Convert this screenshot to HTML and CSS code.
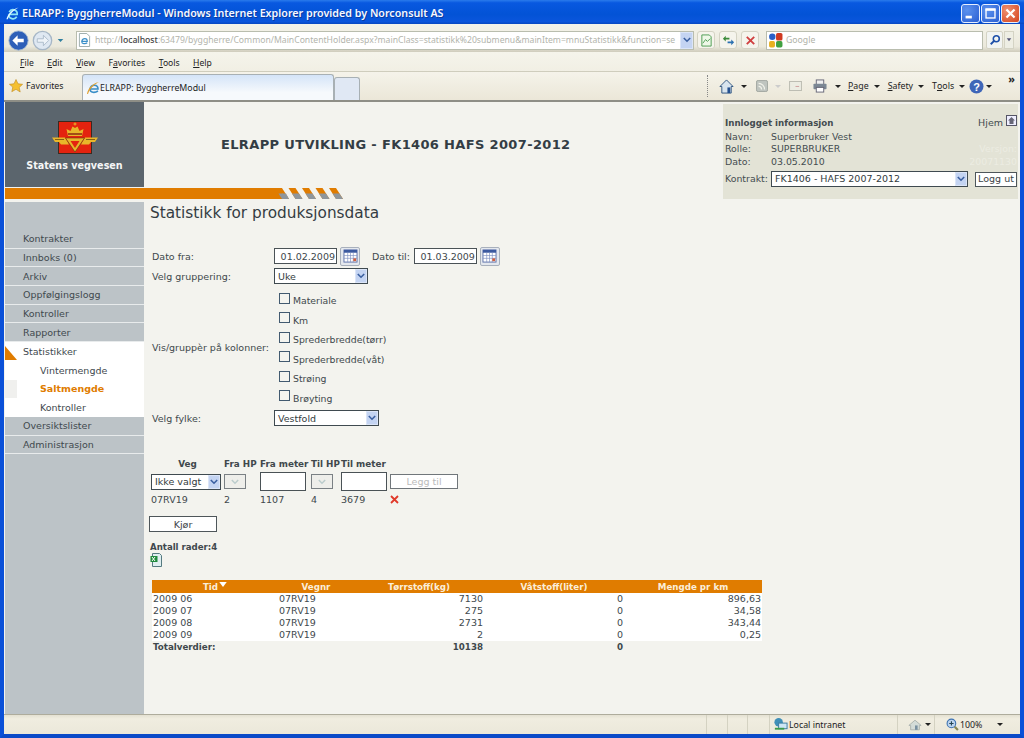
FILE: index.html
```html
<!DOCTYPE html>
<html lang="no">
<head>
<meta charset="utf-8">
<title>ELRAPP: ByggherreModul</title>
<link rel="stylesheet" href="styles.css">
</head>
<body>
<div class="window">
  <header class="titlebar">
    <svg class="ie-title" viewBox="0 0 16 16"><path d="M4 9h9A4.500 4.500 0 0 0 4.500 6.500M4 9a4.600 4.600 0 0 0 8.500 2.500" fill="none" stroke="#8fe4f5" stroke-width="1.800"/><path d="M1.500 14C3 8 8 3 14.500 1.500 10 4 5 8 3 14Z" fill="#e4f8ff"/></svg>
    <span class="title-text">ELRAPP: ByggherreModul - Windows Internet Explorer provided by Norconsult AS</span>
    <div class="win-btns">
      <span class="win-btn"><svg viewBox="0 0 19 19"><rect x="4" y="12" width="7" height="3" fill="#fff"/></svg></span>
      <span class="win-btn"><svg viewBox="0 0 19 19"><rect x="4.500" y="4.500" width="10" height="10" fill="none" stroke="#fff" stroke-width="1.500"/><rect x="4" y="4" width="11" height="2.500" fill="#fff"/></svg></span>
      <span class="win-btn close"><svg viewBox="0 0 19 19"><path d="M5 5l9 9M14 5l-9 9" stroke="#fff" stroke-width="2.500"/></svg></span>
    </div>
  </header>

  <div class="address-row">
    <svg class="nav-back" viewBox="0 0 24 24"><circle cx="12" cy="12" r="11" fill="#2d5fb8" stroke="#9db4cf"/><path d="M5 12l6-6v4h7v4h-7v4Z" fill="#fff"/></svg>
    <svg class="nav-fwd" viewBox="0 0 24 24"><circle cx="12" cy="12" r="10.500" fill="#dfe8f2" stroke="#a6b6c6" stroke-width="1.500"/><path d="M19 12l-6-6v4H6v4h7v4Z" fill="#eef3f8" stroke="#a8b8c8"/></svg>
    <svg class="nav-drop" viewBox="0 0 10 6"><path d="M1 1h8L5 5Z" fill="#2f7f9f"/></svg>
    <div class="url-box">
      <svg class="page-ico" viewBox="0 0 14 15"><path d="M1.500.500h8l3 3v11h-11Z" fill="#fff" stroke="#9aa"/><path d="M4 9h6c0-4-5-4-6 0 0 3 4 3 6 1.500" fill="none" stroke="#3a8fc8" stroke-width="1.300"/></svg>
      <span class="url"><span class="url-dim">http://</span><b class="url-host">localhost</b><span class="url-dim">:63479/byggherre/Common/MainContentHolder.aspx?mainClass=statistikk%20submenu&amp;mainItem=mnuStatistikk&amp;function=se</span></span>
      <span class="combo-arrow url-arrow"><svg viewBox="0 0 10 7"><path d="M1 1l4 4 4-4" fill="none" stroke="#3a5fa0" stroke-width="2"/></svg></span>
    </div>
    <span class="tool-btn"><svg viewBox="0 0 14 14"><path d="M2 1h8l2 2v10H2Z" fill="#eef8e8" stroke="#4a9a50"/><path d="M3 10l3-4 2 2 3-3" fill="none" stroke="#4a9a50"/></svg></span>
    <span class="tool-btn"><svg viewBox="0 0 14 14"><path d="M1 5l3-3v2h4v2H4v2Z" fill="#3a8a3a"/><path d="M13 9l-3 3v-2H6V8h4V6Z" fill="#2a70b0"/></svg></span>
    <span class="tool-btn"><svg viewBox="0 0 14 14"><path d="M3 3l8 8M11 3l-8 8" stroke="#d04040" stroke-width="2"/></svg></span>
    <div class="search-box">
      <svg class="g-ico" viewBox="0 0 14 14"><circle cx="4" cy="3.500" r="3" fill="#2a60c8"/><rect x="7.500" y="0" width="6" height="7" rx="1.500" fill="#d03a20"/><rect x="1" y="7.500" width="5.500" height="6" rx="1.500" fill="#e8b020"/><rect x="7.500" y="7.500" width="6" height="6" rx="1.500" fill="#40a040"/></svg>
      <span class="search-text">Google</span>
    </div>
    <span class="search-btn"><svg viewBox="0 0 14 14"><circle cx="8.500" cy="5.500" r="3.500" fill="none" stroke="#1d4fa8" stroke-width="1.800"/><path d="M6 8l-4 4" stroke="#1d4fa8" stroke-width="2.200"/></svg></span>
    <span class="search-drop"><svg viewBox="0 0 8 5"><path d="M1 0h6L4 4Z" fill="#557"/></svg></span>
  </div>

  <nav class="menu-row">
    <span class="menu-item"><u>F</u>ile</span>
    <span class="menu-item"><u>E</u>dit</span>
    <span class="menu-item"><u>V</u>iew</span>
    <span class="menu-item">F<u>a</u>vorites</span>
    <span class="menu-item"><u>T</u>ools</span>
    <span class="menu-item"><u>H</u>elp</span>
  </nav>

  <div class="tab-row">
    <span class="fav-btn"><svg viewBox="0 0 14 14"><path d="M7 .5l2 4.300 4.600.5-3.400 3.100 1 4.600L7 10.300l-4.200 2.400 1-4.600L.4 5.300 5 4.800Z" fill="#f5c030" stroke="#c08a20" stroke-width=".6"/></svg>Favorites</span>
    <span class="tab"><svg viewBox="0 0 14 14"><path d="M4 8h8c0-5-7-5-8 0 0 4 5 4 8 2" fill="none" stroke="#3a8fc8" stroke-width="1.600"/><path d="M1 13C2 7 7 2 13 1 9 3 4 7 2 13Z" fill="#e0a030"/></svg>ELRAPP: ByggherreModul</span>
    <span class="tab-new"></span>
    <div class="commands">
      <span class="cmd c-home"><svg class="cmd-home" viewBox="0 0 16 16"><path d="M8 1L1 8h2v7h10V8h2Z" fill="#d8e4ee" stroke="#2f5480"/><rect x="9" y="9" width="3" height="6" fill="#24508f"/></svg><i class="caret"></i></span>
      <span class="cmd c-rss"><svg class="cmd-rss" viewBox="0 0 14 14"><rect x=".5" y=".5" width="13" height="13" rx="2" fill="#bfc4bf" stroke="#9aa09a"/><path d="M3 4c4 0 7 3 7 7M3 7.500c2 0 3.500 1.500 3.500 3.500" fill="none" stroke="#f2f2ea" stroke-width="1.400"/></svg><i class="caret pale"></i></span>
      <span class="cmd c-mail"><svg class="cmd-mail" viewBox="0 0 14 11"><rect x=".5" y=".5" width="13" height="10" fill="#ececE2" stroke="#b8b8ae"/><path d="M7 6h4" stroke="#c99"/></svg></span>
      <span class="cmd c-print"><svg class="cmd-print" viewBox="0 0 16 15"><rect x="4" y="1" width="8" height="5" fill="#f0f0f0" stroke="#667"/><rect x="1" y="5" width="14" height="6" rx="1" fill="#7b8794"/><rect x="4" y="9" width="8" height="5" fill="#fff" stroke="#667"/></svg><i class="caret"></i></span>
      <span class="cmd cmd-text c-page"><u>P</u>age<i class="caret"></i></span>
      <span class="cmd cmd-text c-safety"><u>S</u>afety<i class="caret"></i></span>
      <span class="cmd cmd-text c-tools">T<u>o</u>ols<i class="caret"></i></span>
      <span class="cmd c-help"><svg class="cmd-help" viewBox="0 0 15 15"><circle cx="7.500" cy="7.500" r="7" fill="#3f66b8"/><text x="7.500" y="11.500" text-anchor="middle" class="help-q">?</text></svg><i class="caret"></i></span>
      <span class="chevrons">»</span>
    </div>
  </div>
  <div class="chrome-rule"></div>

  <div class="page">
    <div class="head">
      <div class="head-left">
        <div class="head-top">
          <div class="logo">
            <svg class="logo-mark" viewBox="0 0 46 34">
              <rect x="6.500" y="0.500" width="33" height="32" fill="#e4230f" stroke="#3a2a20"/>
              <path d="M0 16.500h13l4 7H9l-2-2.500H3ZM46 16.500H33l-4 7h8l2-2.500h4Z" fill="#e8b62a"/>
              <path d="M3 18.500h9M43 18.500h-9" stroke="#6a4a10" stroke-width=".8"/>
              <path d="M13.500 17h19L23 31Z" fill="#e8b62a" stroke="#5a3a10" stroke-width=".6"/>
              <path d="M18.500 20h9L23 27Z" fill="#e4230f"/>
              <path d="M16 15l-1.500-7 4 2 2-4.500L23 7l2.500-1.500 2 4.500 4-2L30 15Z" fill="#e8b62a"/>
              <path d="M16 13h14" stroke="#8a2a10" stroke-width="1.500"/>
              <path d="M23 1.500v3M21.500 3h3" stroke="#e8b62a"/>
            </svg>
            <span class="logo-text">Statens vegvesen</span>
          </div>
          <h1 class="app-title">ELRAPP UTVIKLING - FK1406 HAFS 2007-2012</h1>
        </div>
        <div class="stripe-row">
          <div class="stripe-bar"></div>
          <svg class="stripes" viewBox="0 0 68 11">
            <path d="M0 0h7l7 11H0Z" fill="#e07c00"/><path d="M3.500 5.500h4.500l3.500 5.500H7Z" fill="#8e969c"/><path d="M7 5.500h4l3 5.500h-4Z" fill="#8e969c"/>
            <path d="M13.500 0h7l7 11h-7Z" fill="#e07c00"/><path d="M17 5.500h7l3.500 5.500h-7Z" fill="#8e969c"/>
            <path d="M27 0h7l7 11h-7Z" fill="#e07c00"/><path d="M30.500 5.500h7L41 11h-7Z" fill="#8e969c"/>
            <path d="M40.500 0h7l7 11h-7Z" fill="#e07c00"/><path d="M44 5.500h7l3.500 5.500h-7Z" fill="#8e969c"/>
            <path d="M54 0h7l7 11h-7Z" fill="#e07c00"/><path d="M57.500 5.500h7L68 11h-7Z" fill="#8e969c"/>
          </svg>
        </div>
      </div>
      <aside class="info">
        <div class="info-top">
          <strong class="info-heading">Innlogget informasjon</strong>
          <span class="home">Hjem <svg viewBox="0 0 11 11"><rect x=".5" y=".5" width="10" height="10" fill="#eef" stroke="#556"/><path d="M5.500 2L2 5.500h1.500V9h4V5.500H9Z" fill="#667"/></svg></span>
        </div>
        <div class="info-line first"><span class="info-key">Navn:</span><span>Superbruker Vest</span></div>
        <div class="info-line"><span class="info-key">Rolle:</span><span>SUPERBRUKER</span><span class="ghost">Versjon:</span></div>
        <div class="info-line"><span class="info-key">Dato:</span><span>03.05.2010</span><span class="ghost">20071130</span></div>
        <div class="contract">
          <span class="info-key">Kontrakt:</span>
          <span class="select contract-select">FK1406 - HAFS 2007-2012<span class="combo-arrow"><svg viewBox="0 0 10 7"><path d="M1 1l4 4 4-4" fill="none" stroke="#3a5fa0" stroke-width="2"/></svg></span></span>
          <span class="btn logout">Logg ut</span>
        </div>
      </aside>
    </div>

    <div class="body">
      <nav class="sidebar">
        <a class="side-item">Kontrakter</a>
        <a class="side-item">Innboks (0)</a>
        <a class="side-item">Arkiv</a>
        <a class="side-item">Oppfølgingslogg</a>
        <a class="side-item">Kontroller</a>
        <a class="side-item">Rapporter</a>
        <div class="side-group">
          <a class="side-item open"><i class="open-mark"></i>Statistikker</a>
          <a class="side-sub">Vintermengde</a>
          <a class="side-sub current">Saltmengde</a>
          <a class="side-sub">Kontroller</a>
        </div>
        <a class="side-item">Oversiktslister</a>
        <a class="side-item">Administrasjon</a>
      </nav>

      <main class="main">
        <h2 class="page-title">Statistikk for produksjonsdata</h2>

        <div class="form-grid">
          <label class="form-label">Dato fra:</label>
          <div class="field-row">
            <span class="input date">01.02.2009</span>
            <span class="cal"><svg viewBox="0 0 16 15"><rect x="1" y="1" width="14" height="13" fill="#fff" stroke="#5a6fa8"/><rect x="1" y="1" width="14" height="3" fill="#3c5aa0"/><path d="M1 7h14M1 10h14M5 4v10M8 4v10M11 4v10" stroke="#7c8fc0" stroke-width=".7"/><rect x="11" y="10" width="3" height="3" fill="#d06040"/></svg></span>
            <span class="to-label">Dato til:</span>
            <span class="input date">01.03.2009</span>
            <span class="cal"><svg viewBox="0 0 16 15"><rect x="1" y="1" width="14" height="13" fill="#fff" stroke="#5a6fa8"/><rect x="1" y="1" width="14" height="3" fill="#3c5aa0"/><path d="M1 7h14M1 10h14M5 4v10M8 4v10M11 4v10" stroke="#7c8fc0" stroke-width=".7"/><rect x="11" y="10" width="3" height="3" fill="#d06040"/></svg></span>
          </div>
          <label class="form-label">Velg gruppering:</label>
          <div class="field-row"><span class="select group-select">Uke<span class="combo-arrow"><svg viewBox="0 0 10 7"><path d="M1 1l4 4 4-4" fill="none" stroke="#3a5fa0" stroke-width="2"/></svg></span></span></div>
          <label class="form-label">Vis/gruppèr på kolonner:</label>
          <div class="checks">
            <span class="check"><i class="box"></i>Materiale</span>
            <span class="check"><i class="box"></i>Km</span>
            <span class="check"><i class="box"></i>Sprederbredde(tørr)</span>
            <span class="check"><i class="box"></i>Sprederbredde(våt)</span>
            <span class="check"><i class="box"></i>Strøing</span>
            <span class="check"><i class="box"></i>Brøyting</span>
          </div>
          <label class="form-label">Velg fylke:</label>
          <div class="field-row"><span class="select county-select">Vestfold<span class="combo-arrow"><svg viewBox="0 0 10 7"><path d="M1 1l4 4 4-4" fill="none" stroke="#3a5fa0" stroke-width="2"/></svg></span></span></div>
        </div>

        <div class="road-grid">
          <b class="rh c-veg">Veg</b><b class="rh">Fra HP</b><b class="rh">Fra meter</b><b class="rh">Til HP</b><b class="rh">Til meter</b><span></span>
          <span class="select road-select">Ikke valgt<span class="combo-arrow"><svg viewBox="0 0 10 7"><path d="M1 1l4 4 4-4" fill="none" stroke="#3a5fa0" stroke-width="2"/></svg></span></span>
          <span class="mini-select"><svg viewBox="0 0 10 7"><path d="M1 1l4 4 4-4" fill="none" stroke="#bcc" stroke-width="1.800"/></svg></span>
          <span class="input meter"></span>
          <span class="mini-select"><svg viewBox="0 0 10 7"><path d="M1 1l4 4 4-4" fill="none" stroke="#bcc" stroke-width="1.800"/></svg></span>
          <span class="input meter"></span>
          <span class="btn add">Legg til</span>
          <span class="rc">07RV19</span><span class="rc">2</span><span class="rc">1107</span><span class="rc">4</span><span class="rc">3679</span>
          <span class="rc"><svg class="del" viewBox="0 0 9 9"><path d="M1 1l7 7M8 1L1 8" stroke="#e0392a" stroke-width="1.800"/></svg></span>
        </div>

        <span class="btn run">Kjør</span>
        <div class="row-count">Antall rader:4</div>
        <svg class="xls" viewBox="0 0 12 14"><path d="M2.500.500h7l2 2v11h-9Z" fill="#dfeef0" stroke="#557a80"/><rect x=".5" y="3" width="7" height="6" fill="#1f8a3c"/><path d="M2 4l3 4M5 4L2 8" stroke="#fff"/></svg>

        <table class="data">
          <thead>
            <tr><th class="w1">Tid<svg class="sort" viewBox="0 0 9 6"><path d="M0 0h9L4.500 6Z" fill="#fff"/></svg></th><th class="w2">Vegnr</th><th class="w3">Tørrstoff(kg)</th><th class="w4">Våtstoff(liter)</th><th class="w5">Mengde pr km</th></tr>
          </thead>
          <tbody>
            <tr><td>2009 06</td><td>07RV19</td><td class="num">7130</td><td class="num">0</td><td class="num">896,63</td></tr>
            <tr><td>2009 07</td><td>07RV19</td><td class="num">275</td><td class="num">0</td><td class="num">34,58</td></tr>
            <tr><td>2009 08</td><td>07RV19</td><td class="num">2731</td><td class="num">0</td><td class="num">343,44</td></tr>
            <tr><td>2009 09</td><td>07RV19</td><td class="num">2</td><td class="num">0</td><td class="num">0,25</td></tr>
          </tbody>
          <tfoot>
            <tr><td>Totalverdier:</td><td></td><td class="num">10138</td><td class="num">0</td><td></td></tr>
          </tfoot>
        </table>
      </main>
    </div>
  </div>

  <footer class="statusbar">
    <span class="st-cell wide"></span><span class="st-cell s1"></span><span class="st-cell s2"></span><span class="st-cell s3"></span>
    <span class="st-zone"><svg viewBox="0 0 16 15"><circle cx="6" cy="5" r="4.500" fill="#3f8fb8"/><rect x="6" y="6" width="9" height="6" fill="#cde6f5" stroke="#3a7aa0"/><path d="M2 12h10" stroke="#3a9a4a" stroke-width="2"/></svg>Local intranet</span>
    <span class="st-lock"><svg viewBox="0 0 16 13"><path d="M8 1L1 7h2v5h10V7h2Z" fill="#d4dcd8" stroke="#a8b0ac"/><rect x="8" y="7" width="3" height="5" fill="#7890a0"/></svg><i class="caret"></i></span>
    <span class="st-zoom"><svg viewBox="0 0 12 12"><circle cx="5" cy="5" r="4" fill="#bcd4ee" stroke="#3a70b0"/><path d="M3 5h4M5 3v4" stroke="#245"/><path d="M8 8l3 3" stroke="#885" stroke-width="2"/></svg>100%<i class="caret zoom-caret"></i></span>
  </footer>
</div>
</body>
</html>
```
FILE: styles.css
```css
* { box-sizing: border-box; }
html, body { margin: 0; height: 100%; overflow: hidden; }
body { background: #0a4fd8; }
svg { display: block; flex: none; }

.window {
  width: 1024px; height: 738px;
  display: flex; flex-direction: column;
  border-left: 4px solid #0a50d8;
  border-right: 4px solid #0a50d8;
  border-bottom: 4px solid #0a4ac8;
  font-family: "DejaVu Sans", Verdana, sans-serif;
  color: #333c40;
}

/* browser chrome */
.titlebar {
  height: 24px; flex: none; margin: 0 -4px; padding: 2px 4px 0 5px;
  display: flex; align-items: center;
  background: linear-gradient(#2a7bec 0, #0858e0 12%, #0353d6 60%, #0a55dc 90%, #0747c0 100%);
}
.ie-title { width: 15px; height: 15px; margin-right: 2px; }
.title-text { font: 600 10.700px "Noto Sans", sans-serif; color: #f6f8ff; text-shadow: 1px 1px 0 #0a3aa0; white-space: nowrap; }
.win-btns { margin-left: auto; display: flex; gap: 1px; }
.win-btn { width: 19px; height: 19px; border: 1px solid #e6efff; border-radius: 3px; background: radial-gradient(circle at 30% 30%, #5c92ee, #2a5fd2); }
.win-btn.close { background: radial-gradient(circle at 30% 30%, #f09070, #d4441e); }

.address-row {
  height: 28px; flex: none; padding: 5px 0 1px 4px;
  display: flex; align-items: center;
  background: linear-gradient(#f4f3ea, #ebe9dc 80%, #cfccbc);
  font-family: "Noto Sans", sans-serif;
}
.nav-back { width: 21px; height: 21px; }
.nav-fwd { width: 21px; height: 21px; margin-left: 3px; }
.nav-drop { width: 7px; height: 5px; margin: 0 12px 0 4px; }
.url-box {
  width: 618px; height: 19px; flex: none; margin-right: 3px;
  display: flex; align-items: center;
  background: #fff; border: 1px solid #b9bdae;
}
.page-ico { width: 13px; height: 14px; margin: 0 4px 0 1px; }
.url { font-size: 8.650px; white-space: nowrap; flex: 1; min-width: 0; }
.url-dim { color: #b2b4ac; }
.url-host { color: #444; font-weight: 500; }
.combo-arrow { width: 12px; align-self: stretch; flex: none; display: flex; align-items: center; justify-content: center; background: #c4d4f2; border: 1px solid #dbe5f8; }
.combo-arrow svg { width: 8px; height: 6px; }
.url-arrow { width: 13px; }
.tool-btn { width: 18px; height: 18px; margin-right: 4px; flex: none; display: flex; align-items: center; justify-content: center; border: 1px solid #d4d3c4; border-radius: 3px; background: #f5f4ec; }
.tool-btn svg { width: 13px; height: 13px; }
.search-box { width: 217px; height: 19px; margin-left: 3px; margin-right: 3px; flex: none; display: flex; align-items: center; background: #fff; border: 1px solid #b9bdae; }
.g-ico { width: 15px; height: 15px; margin: 0 3px 0 1px; }
.search-text { font-size: 8.700px; color: #b0b2a8; }
.search-btn { width: 17px; height: 18px; flex: none; display: flex; align-items: center; justify-content: center; border: 1px solid #d4d3c4; background: #f2f4f2; border-radius: 2px; }
.search-btn svg { width: 12px; height: 12px; }
.search-drop { width: 10px; height: 18px; margin-left: 1px; flex: none; display: flex; align-items: center; justify-content: center; border: 1px solid #d4d3c4; background: #eeeee4; }
.search-drop svg { width: 6px; height: 4px; }

.menu-row {
  height: 20px; flex: none; padding: 3px 0 0 16px;
  display: flex; align-items: center; gap: 13.500px;
  background: linear-gradient(#f5f4eb, #f1efe4);
  border-bottom: 1px solid #cfcdbd;
  font: 8.600px "Noto Sans", sans-serif; color: #222;
}
.tab-row {
  height: 28px; flex: none;
  display: flex; align-items: flex-end;
  background: linear-gradient(#f5f3ea, #ebe7d8);
  font: 8.800px "Noto Sans", sans-serif; color: #222;
}
.fav-btn { align-self: center; display: flex; align-items: center; gap: 3px; margin-left: 5px; width: 73px; }
.fav-btn svg { width: 14px; height: 14px; }
.tab {
  width: 252px; height: 26px; padding: 0 0 0 3px;
  display: flex; align-items: center;
  background: linear-gradient(#d4e4f8, #f6f9fc 70%);
  border: 1px solid #a8b0b4; border-bottom: 0; border-radius: 3px 3px 0 0;
}
.tab svg { width: 14px; height: 14px; }
.tab-new { width: 26px; height: 23px; background: #e0e8f4; border: 1px solid #a8b0b4; border-bottom: 0; border-radius: 3px 3px 0 0; }
.commands {
  margin-left: auto; margin-top: 3px; margin-bottom: 3px; align-self: stretch; width: 313px; padding-left: 11px;
  display: flex; align-items: center;
  border-left: 1px dotted #888;
}
.cmd { display: flex; align-items: center; flex: none; }
.cmd-home { width: 15px; height: 15px; }
.cmd-rss { width: 12px; height: 12px; }
.cmd-mail { width: 13px; height: 10px; }
.cmd-print { width: 16px; height: 14px; }
.cmd-help { width: 15px; height: 15px; }
.help-q { font: bold 11px "Liberation Sans", sans-serif; fill: #fff; }
.caret { display: inline-block; width: 0; height: 0; border: 3px solid transparent; border-top: 3px solid #222; border-bottom: 0; margin-left: 7px; flex: none; }
.caret.pale { border-top-color: #ccc; }
.c-rss { margin-left: 9px; }
.c-mail { margin-left: 8px; }
.c-print { margin-left: 10px; }
.c-page { margin-left: 7px; }
.c-safety { margin-left: 8px; }
.c-tools { margin-left: 8px; }
.c-help { margin-left: 4px; }
.c-help .caret { margin-left: 2px; }
.cmd-text .caret { margin-left: 5px; }
.chevrons { margin-left: 16px; align-self: flex-start; margin-top: -2px; font-size: 11px; font-weight: bold; line-height: 12px; }
.chrome-rule { height: 2px; flex: none; background: #8e8e86; }

/* page */
.page { flex: 1; min-height: 0; display: flex; flex-direction: column; padding-left: 1px; background: #f3f3ee; }
.head { height: 100px; flex: none; display: flex; }
.head-left { flex: 1; min-width: 0; }
.head-top { height: 85px; display: flex; }
.logo { width: 139px; flex: none; background: #5b656d; display: flex; flex-direction: column; align-items: center; padding-top: 19px; }
.logo-mark { width: 46px; height: 34px; }
.logo-text { margin-top: 5px; font-size: 9.600px; font-weight: bold; color: #f6f6f6; white-space: nowrap; }
.app-title { margin: 35px 0 0 77px; font-size: 13px; font-weight: bold; color: #333d44; white-space: nowrap; letter-spacing: .35px; }
.stripe-row { height: 11px; margin-top: 1px; display: flex; width: 338px; }
.stripe-bar { flex: 1; background: #e07c00; }
.stripes { width: 68px; height: 11px; }
.info { width: 295px; flex: none; margin: 2px 2px 3px 0; padding: 13px 1px 0 2px; background: #e3e3d6; font-size: 9.400px; line-height: 12.500px; color: #444c50; }
.info-top { display: flex; justify-content: space-between; align-items: flex-start; }
.info-heading { font-weight: bold; font-size: 8.700px; }
.home { display: flex; gap: 3px; align-items: flex-start; font-size: 9.500px; }
.home svg { width: 11px; height: 11px; margin-top: -2px; }
.info-line { display: flex; }
.info-line.first { margin-top: 1px; }
.info-key { width: 46px; flex: none; }
.ghost { margin-left: auto; color: #ecece2; }
.contract { margin-top: 3px; display: flex; align-items: center; }
.select { display: flex; align-items: center; justify-content: space-between; background: #fff; border: 1px solid #3f4a50; color: #333c40; font-size: 9.500px; padding: 0 0 0 3px; white-space: nowrap; }
.contract-select { width: 197px; height: 16px; }
.logout { width: 42px; height: 15px; margin-left: 7px; font-size: 9px; }
.btn { display: flex; align-items: center; justify-content: center; background: #fff; border: 1px solid #4e565a; font-size: 9.500px; color: #3d4448; }

.body { flex: 1; min-height: 0; display: flex; }
.sidebar { width: 139px; flex: none; padding-top: 28px; background: #bcc3c7; display: flex; flex-direction: column; font-size: 9.500px; color: #41494e; }
.side-item { height: 18.700px; flex: none; padding-left: 18px; display: flex; align-items: center; position: relative; border-bottom: 1px solid #e8ebec; }
.side-group { background: #fff; display: flex; flex-direction: column; }
.side-item.open { border-bottom: 0; }
.open-mark { position: absolute; left: 0; top: 4px; border-left: 12px solid #e07c00; border-top: 14px solid transparent; }
.side-sub { height: 18.700px; padding-left: 35px; display: flex; align-items: center; }
.side-sub.current { color: #e07c00; font-weight: bold; box-shadow: inset 12px 0 0 #f0f0ee; }

.main { flex: 1; min-width: 0; padding: 3px 0 0 5px; font-size: 9.500px; color: #40484c; }
.page-title { margin: 0 0 0 1px; font-size: 15.300px; font-weight: normal; line-height: 17px; color: #333c42; }
.form-grid { margin: 24px 0 0 3px; display: grid; grid-template-columns: 122px 1fr; align-items: center; }
.form-label { white-space: nowrap; font-size: 9.500px; }
.field-row { display: flex; align-items: center; min-height: 20px; }
.input { display: flex; align-items: center; justify-content: flex-end; background: #fff; border: 1px solid #4a5256; }
.date { width: 63px; height: 16px; padding-right: 1px; font-size: 9.500px; white-space: nowrap; }
.cal { width: 20px; height: 19px; margin-left: 3px; border: 1px solid #a8b0bc; background: #e4e8ee; display: flex; align-items: center; justify-content: center; border-radius: 2px; }
.cal svg { width: 15px; height: 14px; }
.to-label { margin: 0 4px 0 12px; font-size: 9.500px; white-space: nowrap; }
.group-select { width: 94px; height: 16px; }
.checks { display: flex; flex-direction: column; margin: 5px 0 0 5px; }
.check { height: 19.500px; display: flex; align-items: center; gap: 3px; font-size: 9.300px; }
.box { width: 11px; height: 11px; margin-top: -5px; background: #f4f4ef; border: 1px solid #425a70; }
.county-select { width: 105px; height: 16px; }

.road-grid { margin: 31px 0 0 2px; display: grid; grid-template-columns: 73px 36px 51px 30px 49px 68px; align-items: center; justify-items: start; }
.rh { font-size: 8.800px; white-space: nowrap; height: 13px; }
.c-veg { justify-self: center; }
.road-select { width: 70px; height: 16px; }
.mini-select { width: 22px; height: 15px; display: flex; align-items: center; justify-content: center; background: #eeeeea; border: 1px solid #7a8084; }
.mini-select svg { width: 8px; height: 6px; }
.meter { width: 46px; height: 19px; }
.add { width: 68px; height: 15px; color: #bbb; border-color: #70767a; }
.rc { font-size: 9.500px; height: 16px; display: flex; align-items: center; }
.del { width: 9px; height: 9px; }
.run { width: 68px; height: 16px; margin-top: 9px; }
.row-count { margin: 9px 0 0 1px; font-weight: bold; font-size: 8.600px; line-height: 12px; }
.xls { width: 12px; height: 14px; margin-left: 1px; }

.data { margin: 13px 0 0 3px; width: 610px; border-collapse: collapse; table-layout: fixed; font-size: 9.500px; }
.data th { height: 13px; padding: 0; background: #e07c00; color: #fbeeda; font-size: 8.700px; font-weight: bold; text-align: center; white-space: nowrap; line-height: 12px; }
.sort { display: inline-block; width: 8px; height: 5px; margin: 0 0 3px 1px; }
.w1 { width: 126px; } .w2 { width: 76px; } .w3 { width: 130px; } .w4 { width: 140px; } .w5 { width: 138px; }
.data td { height: 12px; padding: 0 1px; line-height: 12px; background: #fff; white-space: nowrap; }
.data .num { text-align: right; }
.data tfoot td { background: transparent; font-size: 8.700px; font-weight: bold; }

/* status */
.statusbar {
  height: 20px; flex: none;
  display: flex; align-items: center;
  background: linear-gradient(#e4e1d2, #f0ede0 20%, #ebe8da);
  border-top: 1px solid #aeac9c;
  font: 8.800px "Noto Sans", sans-serif; color: #222;
}
.st-cell { height: 100%; border-right: 1px solid #d4d2c2; flex: none; }
.wide { width: 703px; }
.s1 { width: 21px; }
.s2 { width: 20px; }
.s3 { width: 22px; }
.st-zone { width: 128px; height: 100%; flex: none; padding-left: 3px; display: flex; align-items: center; gap: 1px; border-right: 1px solid #d4d2c2; }
.st-zone svg { width: 15px; height: 15px; }
.st-lock { width: 37px; height: 100%; flex: none; padding-left: 10px; display: flex; align-items: center; border-right: 1px solid #d4d2c2; }
.st-lock svg { width: 14px; height: 12px; }
.st-lock .caret { margin-left: 3px; }
.st-zoom { display: flex; align-items: center; gap: 1px; padding-left: 11px; flex: none; width: 85px; }
.st-zoom svg { width: 13px; height: 13px; }
.zoom-caret { margin-left: 14px; }
```
